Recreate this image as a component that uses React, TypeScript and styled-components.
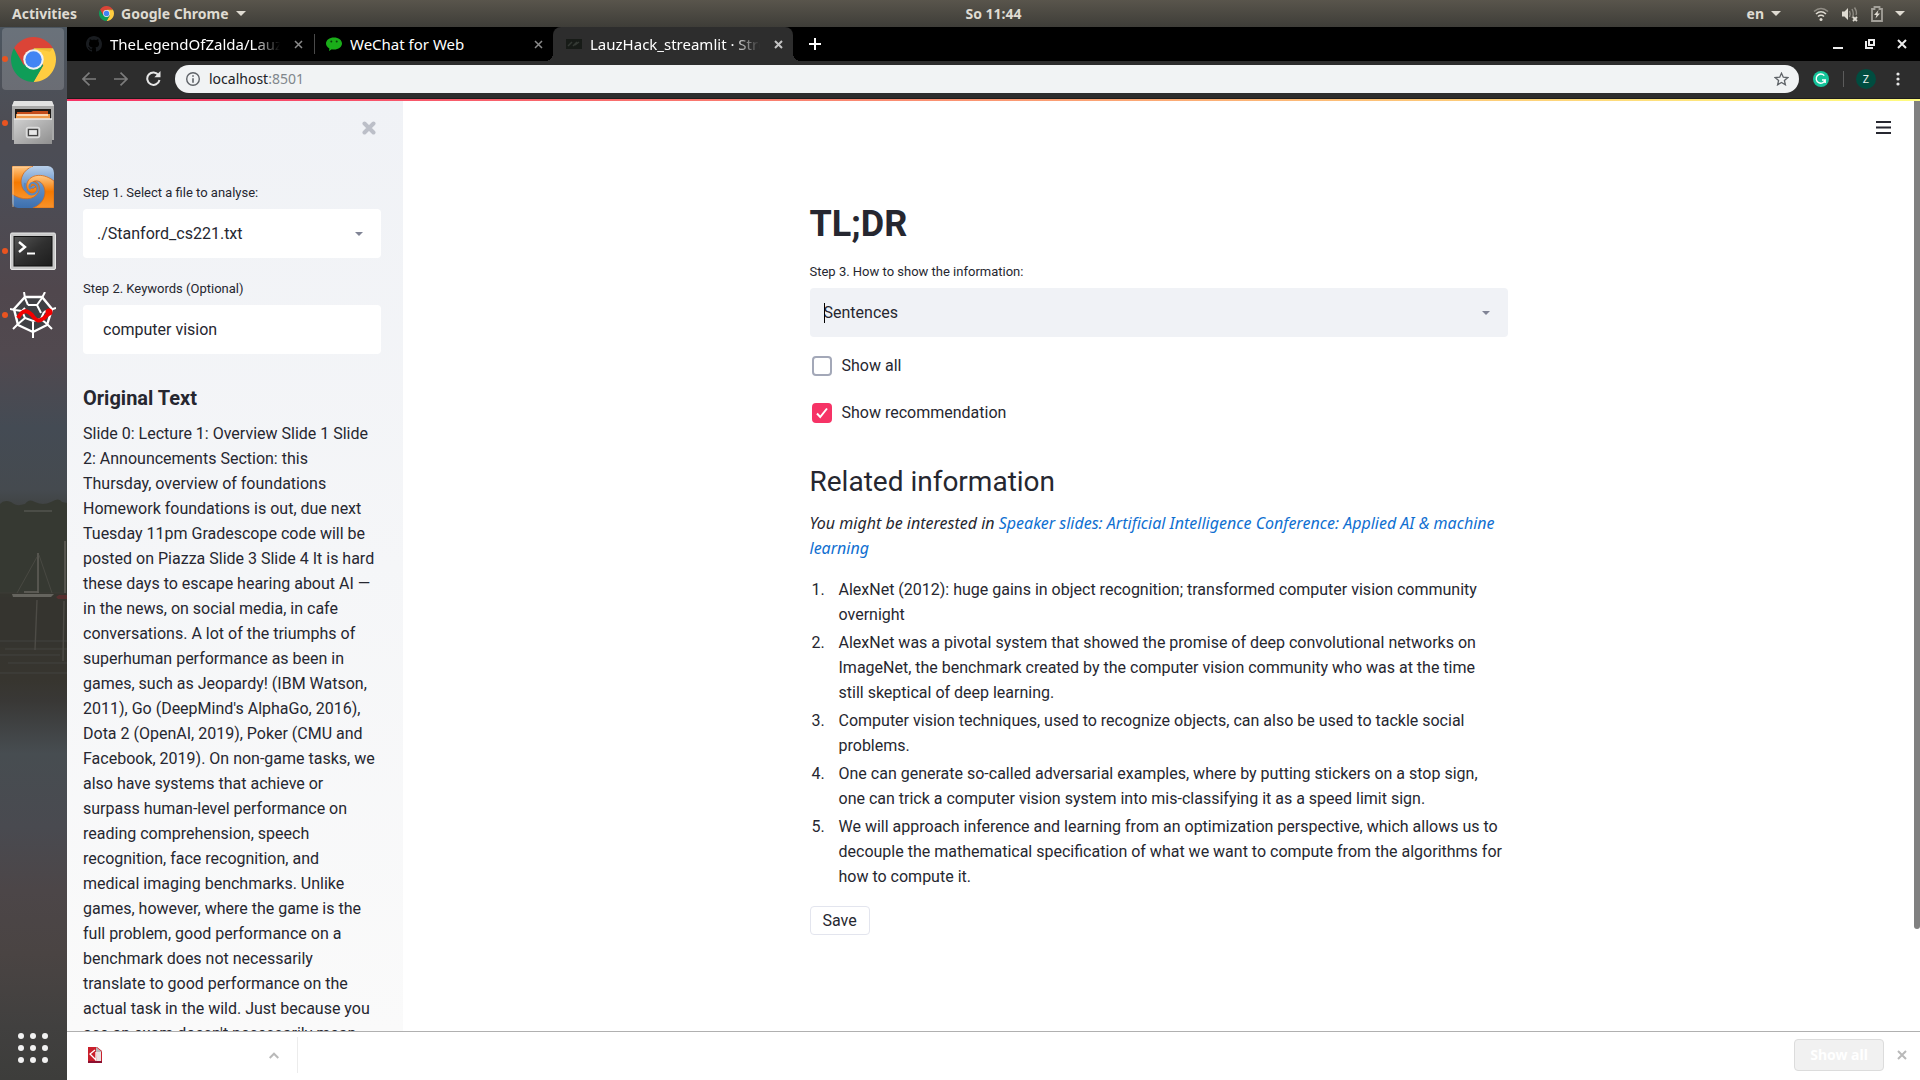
import React from "react";
import styled, { createGlobalStyle } from "styled-components";

const UI = `"Noto Sans", "Open Sans", sans-serif`;
const BODY = `Roboto, "Noto Sans", sans-serif`;

const GlobalStyle = createGlobalStyle`
  *, *::before, *::after { box-sizing: border-box; }
  body { margin: 0; background: #3d3d3b; color: #262730; font: 16px/25px ${BODY}; overflow: hidden; }
  button { padding: 0; border: 0; background: none; color: inherit; font: inherit; cursor: pointer; }
  h1, h2, h3, p, ol { margin: 0; padding: 0; }
  svg { display: block; flex: none; }
`;

/* ---------- desktop ---------- */

const Desktop = styled.div`
  display: flex;
  flex-direction: column;
  height: 100vh;
`;

const TopBar = styled.header`
  display: grid;
  grid-template-columns: 1fr auto 1fr;
  align-items: center;
  height: 27px;
  flex: none;
  padding: 0 15px 0 12px;
  background: linear-gradient(#59554c, #3e3d38);
  color: #dfdbd2;
  font: bold 14px/20px ${UI};
`;

const TopGroup = styled.div<{ $end?: boolean; $gap: number }>`
  display: flex;
  align-items: center;
  gap: ${(p) => p.$gap}px;
  justify-content: ${(p) => (p.$end ? "flex-end" : "flex-start")};
`;

const TopItem = styled.button`
  display: flex;
  align-items: center;
  gap: 7px;
`;

const Clock = styled.time`
  padding-left: 70px;
  font-size: 14px;
`;

const Workspace = styled.div`
  display: flex;
  flex: 1;
  min-height: 0;
`;

const Dock = styled.nav`
  position: relative;
  display: flex;
  flex-direction: column;
  gap: 2px;
  width: 67px;
  flex: none;
  padding: 1px 3px 1px 2px;
  background: linear-gradient(
    #4c5660 0%, #4d4d54 9%, #4b4d56 14%, #50474d 25%, #51494f 31%, #444b54 38%, #454a4f 44%,
    #3b3c38 47%, #35352f 53%, #37352f 62%, #393836 64%, #474d51 69%, #494a50 76%, #4c4648 82%, #4a4443 88%, #41403f 95%, #3d3d3b 100%
  );
`;

const Shore = styled.svg`
  position: absolute;
  left: 0;
  top: 468px;
`;

const DockItem = styled.button<{ $active?: boolean }>`
  position: relative;
  display: grid;
  place-items: center;
  height: 62px;
  width: 62px;
  border-radius: 4px;
  background: ${(p) => (p.$active ? "rgba(255,255,255,0.17)" : "transparent")};
`;

const RunningDot = styled.span`
  position: absolute;
  left: 0;
  top: 28px;
  width: 6px;
  height: 6px;
  border-radius: 50%;
  background: #e95420;
`;

const AppsButton = styled.button`
  position: relative;
  display: grid;
  place-items: center;
  height: 62px;
  width: 62px;
  margin-top: auto;
`;

/* ---------- browser ---------- */

const Browser = styled.div`
  display: flex;
  flex-direction: column;
  flex: 1;
  min-width: 0;
  background: #fff;
`;

const TabStrip = styled.div`
  display: flex;
  align-items: center;
  height: 34px;
  flex: none;
  padding: 0 8px 0 6px;
  background: #000;
  color: #fff;
  font: 15px/20px ${UI};
`;

const Tab = styled.div<{ $active?: boolean; $divider?: boolean }>`
  position: relative;
  display: flex;
  align-items: center;
  gap: 8px;
  width: 240px;
  height: 34px;
  padding: 0 5px 0 13px;
  border-radius: 8px 8px 0 0;
  background: ${(p) => (p.$active ? "#2d2d2d" : "transparent")};
  color: ${(p) => (p.$active ? "#c3c3c3" : "#8a8a8a")};

  &::before {
    content: "";
    position: absolute;
    left: -8px;
    bottom: 0;
    width: 8px;
    height: 8px;
    display: ${(p) => (p.$active ? "block" : "none")};
    background: radial-gradient(circle at 0 0, transparent 8px, #2d2d2d 8px);
  }
  &::after {
    content: "";
    position: absolute;
    display: ${(p) => (p.$active || p.$divider ? "block" : "none")};
    right: ${(p) => (p.$active ? "-8px" : "-2px")};
    bottom: ${(p) => (p.$active ? "0" : "7px")};
    width: ${(p) => (p.$active ? "8px" : "1px")};
    height: ${(p) => (p.$active ? "8px" : "20px")};
    background: ${(p) => (p.$active ? "radial-gradient(circle at 100% 0, transparent 8px, #2d2d2d 8px)" : "#4a4a4a")};
  }
`;

const TabTitle = styled.span<{ $fade?: boolean }>`
  flex: 1;
  min-width: 0;
  overflow: hidden;
  white-space: nowrap;
  color: #fff;
  mask-image: ${(p) => (p.$fade ? "linear-gradient(90deg, #000 84%, transparent)" : "none")};
`;

const IconButton = styled.button`
  display: grid;
  place-items: center;
  width: 20px;
  height: 20px;
  flex: none;
`;

const NewTab = styled(IconButton)`
  margin-left: 12px;
  color: #fff;
`;

const WindowControls = styled.div`
  display: flex;
  gap: 12px;
  margin-left: auto;
  color: #ececec;
`;

const Toolbar = styled.div`
  display: flex;
  align-items: center;
  gap: 12px;
  height: 38px;
  flex: none;
  padding: 0 12px 2px 12px;
  border-bottom: 1px solid #1d1d1d;
  background: #2d2d2d;
  color: #7c7c7c;
`;

const AddressBar = styled.form`
  display: flex;
  align-items: center;
  gap: 6px;
  flex: 1;
  height: 28px;
  padding: 0 8px;
  border-radius: 14px;
  background: #f1f3f4;
  color: #5f6368;
  font: 14px/20px ${UI};
`;

const Url = styled.a`
  flex: 1;
  color: #80868b;
  text-decoration: none;

  b { font-weight: 400; color: #202124; }
`;

const Divider = styled.span`
  width: 1px;
  height: 16px;
  background: #5c5c5c;
`;

const Avatar = styled.button`
  width: 20px;
  height: 20px;
  border-radius: 50%;
  background: #004d40;
  color: #e8f0ee;
  font: 11px/20px ${UI};
`;

/* ---------- page ---------- */

const Rainbow = styled.div`
  height: 2px;
  flex: none;
  background: linear-gradient(90deg, #f63366, #fffd80);
`;

const Page = styled.div`
  display: flex;
  flex: 1;
  min-height: 0;
`;

const Sidebar = styled.aside`
  width: 336px;
  flex: none;
  padding: 0 22px 0 16px;
  overflow: hidden;
  background: linear-gradient(#f0f2f6, #fafafa);
`;

const PanelHeader = styled.div<{ $inset: number }>`
  display: flex;
  align-items: center;
  justify-content: flex-end;
  height: 53px;
  padding-right: ${(p) => p.$inset}px;
`;

const SidebarBody = styled.div`
  padding-top: 29px;
`;

const FieldLabel = styled.label`
  display: block;
  margin-bottom: 6px;
  font-size: 13px;
  line-height: 20px;
`;

const SelectBox = styled.div<{ $plain?: boolean }>`
  position: relative;
  margin-bottom: 21px;

  svg {
    position: absolute;
    right: 18px;
    top: 23px;
    pointer-events: none;
  }
  select {
    appearance: none;
    display: block;
    width: 100%;
    height: 49px;
    padding: 0 36px 0 14px;
    border: 0;
    border-radius: 4px;
    outline: 0;
    background: ${(p) => (p.$plain ? "#fff" : "#f0f2f6")};
    color: #262730;
    font: 16px/25px ${BODY};
  }
`;

const TextCaret = styled.span`
  position: absolute;
  left: 14px;
  top: 15px;
  width: 1px;
  height: 20px;
  background: #000;
`;

const TextInput = styled.input`
  display: block;
  width: 100%;
  height: 49px;
  padding: 0 20px;
  border: 0;
  border-radius: 4px;
  outline: 0;
  background: #fff;
  color: #262730;
  font: 16px/25px ${BODY};
`;

const SidebarHeading = styled.h3`
  margin: 29px 0 8px;
  font-size: 20px;
  line-height: 30px;
`;

const SourceText = styled.p`
  padding-right: 4px;
`;

const Main = styled.main`
  flex: 1;
  min-width: 0;
  overflow: hidden;
`;

const Column = styled.div`
  max-width: 730px;
  margin: 0 auto;
  padding: 48px 16px 0;
`;

const Title = styled.h1`
  margin-bottom: 16px;
  font-size: 36px;
  line-height: 44px;
`;

const CheckRow = styled.label`
  display: flex;
  align-items: center;
  gap: 10px;
  margin: -5px 0 27px 2px;
`;

const CheckBox = styled.span`
  display: grid;
  flex: none;

  input, svg { grid-area: 1 / 1; }
  svg { display: none; place-self: center; pointer-events: none; }
  input {
    appearance: none;
    width: 20px;
    height: 20px;
    margin: 0;
    border: 2px solid #a3a8b8;
    border-radius: 4px;
    background: #fff;
  }
  input:checked { border-color: #f63366; background: #f63366; }
  input:checked + svg { display: block; }
`;

const Section = styled.section`
  padding-top: 12px;
`;

const SectionTitle = styled.h2`
  margin-bottom: 11px;
  font-size: 28px;
  font-weight: 400;
  line-height: 36px;
`;

const Suggestion = styled.p`
  margin-bottom: 16px;
  font-family: "Noto Sans", sans-serif;
  font-style: italic;

  a { color: #0f6fd1; text-decoration: none; }
`;

const Results = styled.ol`
  padding: 0 4px 0 29px;
  margin-bottom: 17px;
  list-style: none;
  counter-reset: result;

  li { counter-increment: result; }
  li + li { margin-top: 3px; }
  li::before {
    content: counter(result) ".";
    float: left;
    margin-left: -27px;
  }
`;

const SaveButton = styled.button`
  height: 29px;
  padding: 0 12px;
  border: 1px solid #e3e5ee;
  border-radius: 4px;
  background: #fff;
`;

const ScrollTrack = styled.div`
  width: 6px;
  flex: none;
`;

const ScrollThumb = styled.div`
  height: 89%;
  border-radius: 0 0 3px 3px;
  background: #808080;
`;

const DownloadBar = styled.footer`
  display: flex;
  align-items: center;
  height: 49px;
  flex: none;
  padding: 0 8px 2px 18px;
  border-top: 1px solid #b0b0b0;
  background: #fff;
  color: #b9b9b9;
`;

const Download = styled.div`
  display: flex;
  align-items: center;
  justify-content: space-between;
  width: 213px;
  height: 36px;
  padding-right: 13px;
  border-right: 1px solid #ececec;
`;

const ShowAll = styled.button`
  height: 32px;
  width: 90px;
  margin: 0 8px 0 auto;
  border: 1px solid #dcdcdc;
  border-radius: 4px;
  background: #f1f1f1;
  color: #fff;
  font: bold 14px/20px ${UI};
`;

/* ---------- drawings ---------- */

const Triangle = ({ w, h, fill }: { w: number; h: number; fill: string }) => (
  <svg width={w} height={h} viewBox="0 0 10 5" preserveAspectRatio="none"><path d="M0 0h10L5 5z" fill={fill} /></svg>
);

const Cross = ({ size, width = 2 }: { size: number; width?: number }) => (
  <svg width={size} height={size} viewBox={`0 0 ${size} ${size}`} stroke="currentColor" strokeWidth={width}>
    <path d={`M1 1L${size - 1} ${size - 1}M${size - 1} 1L1 ${size - 1}`} />
  </svg>
);

const ChromeLogo = ({ size }: { size: number }) => (
  <svg width={size} height={size} viewBox="2 2 44 44">
    <path d="M4.95 13A22 22 0 0 1 43.05 13H24L14.47 29.5z" fill="#db4437" />
    <path d="M43.05 13A22 22 0 0 1 24 46L33.53 29.5L24 13z" fill="#ffcd40" />
    <path d="M24 46A22 22 0 0 1 4.95 13L14.47 29.5H33.53z" fill="#0f9d58" />
    <path d="M24 13H43.05L40 16.5z" fill="#d9a21c" opacity=".35" />
    <circle cx="24" cy="24" r="10" fill="#f1f1f1" />
    <circle cx="24" cy="24" r="8" fill="#4285f4" />
  </svg>
);

const FilesIcon = () => (
  <svg width="44" height="46" viewBox="0 0 44 46">
    <defs>
      <linearGradient id="cab" x1="0" y1="0" x2="1" y2="1"><stop offset="0" stopColor="#d0d0d0" /><stop offset="1" stopColor="#8f8f8f" /></linearGradient>
    </defs>
    <path d="M3 1h38l2 5v34H1V6z" fill="#a9a9a9" />
    <path d="M3 1h38l2 5H1z" fill="#e2e2e2" />
    <rect x="4" y="9" width="36" height="12" fill="#1d1a18" />
    <path d="M6 12h14l2-1h15v8H6z" fill="#c44d1a" />
    <path d="M5 14h34v6H5z" fill="#ef9a4b" />
    <path d="M6 15h31" stroke="#fff4e2" strokeWidth="1.4" />
    <path d="M3 19h38v25H3z" fill="url(#cab)" />
    <path d="M3 19h38" stroke="#ececec" strokeWidth="1.4" />
    <rect x="15.5" y="27.5" width="13" height="10" rx="2" fill="#b5b5b5" stroke="#dcdcdc" strokeWidth="1.5" />
    <rect x="17.5" y="29.5" width="9" height="6" fill="#e8e8e8" stroke="#444" strokeWidth="1.2" />
  </svg>
);

const SwirlIcon = () => (
  <svg width="42" height="42" viewBox="0 0 42 42">
    <defs>
      <linearGradient id="sb" x1="0" y1="0" x2="0" y2="1"><stop offset="0" stopColor="#b9d0ea" /><stop offset=".5" stopColor="#5f8fc8" /><stop offset="1" stopColor="#3d6fae" /></linearGradient>
      <linearGradient id="so" x1="0" y1="0" x2="0" y2="1"><stop offset="0" stopColor="#ffc987" /><stop offset=".5" stopColor="#f57900" /><stop offset="1" stopColor="#f9932a" /></linearGradient>
    </defs>
    <path d="M0 0H36Q42 1 42 7V42H6Q0 41 0 35z" fill="url(#sb)" />
    <path d="M0 0H21C11 4 7 13 10 21C13 29 22 29 24 22C24 19 20 18 19 21C16 20 17 15 21 15C27 15 29 22 26 27C22 34 10 35 0 28z" fill="url(#so)" stroke="#cf6a1c" strokeWidth=".8" />
    <path d="M42 42H21C31 38 35 29 32 21C29 13 20 13 18 20C18 23 22 24 23 21C26 22 25 27 21 27C15 27 13 20 16 15C20 8 32 7 42 15z" fill="url(#so)" stroke="#cf6a1c" strokeWidth=".8" />
    <path d="M13 17C12 24 16 30 22 28C27 26 27 19 22 17C18 16 16 21 19 23" fill="none" stroke="#5a88c0" strokeWidth="2" />
    <path d="M1 41V1H20" fill="none" stroke="#ffdcae" strokeWidth="1" opacity=".7" />
  </svg>
);

const TerminalIcon = () => (
  <svg width="46" height="38" viewBox="0 0 46 38">
    <defs><linearGradient id="term" x1="0" y1="0" x2="1" y2="1"><stop offset="0" stopColor="#555" /><stop offset=".5" stopColor="#303030" /><stop offset="1" stopColor="#1c1c1c" /></linearGradient></defs>
    <rect x=".5" y="1" width="45" height="36.5" rx="1.5" fill="#c9c9c9" stroke="#e6e6e6" />
    <rect x="4" y="4.500" width="38" height="29.5" fill="url(#term)" stroke="#111" />
    <path d="M9 10l6 5-6 5" fill="none" stroke="#fff" strokeWidth="2.4" />
    <path d="M17 21.500h8" stroke="#fff" strokeWidth="2" />
  </svg>
);

const WebIcon = () => (
  <svg width="46" height="46" viewBox="0 0 46 46" fill="none">
    <path d="M14 5L32 5L42 17L38 34L23 41L8 34L4 17z" fill="#3f4044" />
    <g stroke="#fff" strokeWidth="2">
      <path d="M14 0L15 6L18 13M35 0L32 6L27 13L31 21M46 16L40 18L34 20M42 37L37 32L31 27M23 46V30M3 37L8 32L15 26M0 17L5 18L12 19" />
      <path d="M15 5L32 5L42 17L37 33L23 40L8 33L4 17z" strokeWidth="2.4" />
      <path d="M18 13L27 13M12 19L15 26L23 29L31 27M15 16L12 19M34 20L31 27" />
    </g>
    <path d="M8 26C13 17 17 18 22 23C26 29 29 30 34 26Q37 23 41 20" stroke="#f20000" strokeWidth="4" />
    <circle cx="39" cy="20" r="3.5" fill="#f20000" />
  </svg>
);

const GithubMark = () => (
  <svg width="16" height="16" viewBox="0 0 16 16" fill="#191c20">
    <path d="M8 0C3.58 0 0 3.58 0 8c0 3.54 2.29 6.53 5.47 7.59.4.07.55-.17.55-.38 0-.19-.01-.82-.01-1.49-2.01.37-2.53-.49-2.69-.94-.09-.23-.48-.94-.82-1.13-.28-.15-.68-.52-.01-.53.63-.01 1.08.58 1.23.82.72 1.21 1.87.87 2.33.66.07-.52.28-.87.51-1.07-1.78-.2-3.64-.89-3.64-3.95 0-.87.31-1.59.82-2.15-.08-.2-.36-1.02.08-2.12 0 0 .67-.21 2.2.82.64-.18 1.32-.27 2-.27s1.36.09 2 .27c1.53-1.04 2.2-.82 2.2-.82.44 1.1.16 1.92.08 2.12.51.56.82 1.27.82 2.15 0 3.07-1.87 3.75-3.65 3.95.29.25.54.73.54 1.48 0 1.07-.01 1.93-.01 2.2 0 .21.15.46.55.38A8.01 8.01 0 0 0 16 8c0-4.42-3.58-8-8-8z" />
  </svg>
);

const WechatMark = () => (
  <svg width="16" height="16" viewBox="0 0 16 16">
    <path d="M8 1.500c4.500 0 8 2.600 8 6s-3.500 6-8 6c-.8 0-1.500-.1-2.200-.3L3 15l.4-2.600C1.300 11.300 0 9.600 0 7.500c0-3.400 3.500-6 8-6z" fill="#1aad19" />
    <circle cx="5.3" cy="5.6" r="1" fill="#0a3d0a" /><circle cx="10.7" cy="5.6" r="1" fill="#0a3d0a" />
  </svg>
);

const StreamlitMark = () => (
  <svg width="16" height="16" viewBox="0 0 16 16">
    <rect y="3" width="16" height="10" fill="#171b17" />
    <path d="M2 10l4-4M7 10l4-4M9 9l4-3" stroke="#343934" strokeWidth="1.5" />
  </svg>
);

const StatusIcons = () => (
  <>
    <svg width="16" height="16" viewBox="0 0 16 16" fill="none" stroke="#dfdbd2" strokeWidth="1.6">
      <path d="M1 5.500Q8-.5 15 5.500" opacity=".45" /><path d="M3 8Q8 3.500 13 8M5 10.500Q8 8 11 10.500" /><circle cx="8" cy="13.5" r="1.5" fill="#dfdbd2" stroke="none" />
    </svg>
    <svg width="18" height="16" viewBox="0 0 18 16" fill="none" stroke="#dfdbd2" strokeWidth="1.4">
      <path d="M1 5.500h2.500L7 2v12l-3.500-3.500H1z" fill="#dfdbd2" stroke="none" />
      <path d="M8.500 5Q10 8 8.500 11M11 3Q13.500 8 11 12M13.500 1.500Q16.500 6 15 9" opacity=".45" /><path d="M12 11l4 4M16 11l-4 4" strokeWidth="1.8" />
    </svg>
    <svg width="12" height="16" viewBox="0 0 12 16" fill="none">
      <path d="M1 3h2.500V1h5v2H11v12H1z" stroke="#a3a099" strokeWidth="1.8" /><path d="M7.500 4L3 9h2.500L4.500 12.500 9 7.500H6.500z" fill="#dfdbd2" />
    </svg>
  </>
);

const ShoreScene = () => (
  <Shore width="67" height="200" viewBox="0 0 67 200" aria-hidden="true">
    <path d="M0 9q4-5 11-2q5 5 14 2q4-6 10-2q8 4 16 0q8-5 11 0l5 1v90H0z" fill="#363932" />
    <path d="M24 16h28" stroke="#53544f" strokeWidth="1.5" />
    <path d="M0 102h67v50H0z" fill="#35342f" />
    <path d="M0 98h67" stroke="#3d3c36" strokeWidth="1" />
    <path d="M12 99h42l-3 3H13z" fill="#65645e" />
    <path d="M24 96h14l1 2H24z" fill="#5a5953" />
    <path d="M38 58v40M65 46v52" stroke="#64635c" strokeWidth="1.4" />
    <path d="M39 60l13 38M37 62L17 98" stroke="#4d4c46" strokeWidth=".8" />
    <path d="M56 102l3-2h8v4H58z" fill="#572f2f" />
    <path d="M37 105l-2 50M64 106l-1 60" stroke="#4d4b46" strokeWidth="1.4" />
    <path d="M0 146h67M5 154h62M0 160h60M8 168h59M0 178h67" stroke="#4b4d4c" strokeWidth="1" opacity=".6" />
  </Shore>
);

const dockApps = [
  { name: "Google Chrome", icon: <ChromeLogo size={45} />, active: true, running: true },
  { name: "Files", icon: <FilesIcon />, running: true },
  { name: "Swirl", icon: <SwirlIcon /> },
  { name: "Terminal", icon: <TerminalIcon />, running: true },
  { name: "Spyder", icon: <WebIcon />, running: true },
];

const results = [
  "AlexNet (2012): huge gains in object recognition; transformed computer vision community overnight",
  "AlexNet was a pivotal system that showed the promise of deep convolutional networks on ImageNet, the benchmark created by the computer vision community who was at the time still skeptical of deep learning.",
  "Computer vision techniques, used to recognize objects, can also be used to tackle social problems.",
  "One can generate so-called adversarial examples, where by putting stickers on a stop sign, one can trick a computer vision system into mis-classifying it as a speed limit sign.",
  "We will approach inference and learning from an optimization perspective, which allows us to decouple the mathematical specification of what we want to compute from the algorithms for how to compute it.",
];

const sourceText =
  "Slide 0: Lecture 1: Overview Slide 1 Slide 2: Announcements Section: this Thursday, overview of foundations Homework foundations is out, due next Tuesday 11pm Gradescope code will be posted on Piazza Slide 3 Slide 4 It is hard these days to escape hearing about AI — in the news, on social media, in cafe conversations. A lot of the triumphs of superhuman performance as been in games, such as Jeopardy! (IBM Watson, 2011), Go (DeepMind's AlphaGo, 2016), Dota 2 (OpenAI, 2019), Poker (CMU and Facebook, 2019). On non-game tasks, we also have systems that achieve or surpass human-level performance on reading comprehension, speech recognition, face recognition, and medical imaging benchmarks. Unlike games, however, where the game is the full problem, good performance on a benchmark does not necessarily translate to good performance on the actual task in the wild. Just because you ace an exam doesn't necessarily mean";

const Check = ({ label, on }: { label: string; on?: boolean }) => (
  <CheckRow>
    <CheckBox>
      <input type="checkbox" defaultChecked={on} />
      <svg width="12" height="12" viewBox="0 0 12 12" fill="none" stroke="#fff" strokeWidth="2"><path d="M1 6.500l3.200 3.500L11 1.500" /></svg>
    </CheckBox>
    {label}
  </CheckRow>
);

export default function App() {
  return (
    <Desktop>
      <GlobalStyle />
      <TopBar>
        <TopGroup $gap={22}>
          <TopItem>Activities</TopItem>
          <TopItem><ChromeLogo size={15} />Google Chrome<Triangle w={10} h={5} fill="#dfdbd2" /></TopItem>
        </TopGroup>
        <Clock>So 11:44</Clock>
        <TopGroup $end $gap={32}>
          <TopItem>en<Triangle w={10} h={5} fill="#dfdbd2" /></TopItem>
          <TopGroup $gap={12}>
            <StatusIcons /><Triangle w={10} h={5} fill="#dfdbd2" />
          </TopGroup>
        </TopGroup>
      </TopBar>
      <Workspace>
        <Dock aria-label="Dock">
          <ShoreScene />
          {dockApps.map((app) => (
            <DockItem key={app.name} aria-label={app.name} $active={app.active}>
              {app.running && <RunningDot />}
              {app.icon}
            </DockItem>
          ))}
          <AppsButton aria-label="Show applications">
            <svg width="30" height="30" viewBox="0 0 30 30" fill="#f2f2f2">
              {[3, 15, 27].map((y) => [3, 15, 27].map((x) => <circle key={`${x}-${y}`} cx={x} cy={y} r="3" />))}
            </svg>
          </AppsButton>
        </Dock>
        <Browser>
          <TabStrip>
            <Tab $divider>
              <GithubMark /><TabTitle $fade>TheLegendOfZalda/LauzHack</TabTitle>
              <IconButton aria-label="Close tab"><Cross size={9} width={1.5} /></IconButton>
            </Tab>
            <Tab>
              <WechatMark /><TabTitle>WeChat for Web</TabTitle>
              <IconButton aria-label="Close tab"><Cross size={9} width={1.5} /></IconButton>
            </Tab>
            <Tab $active>
              <StreamlitMark /><TabTitle $fade>LauzHack_streamlit · Streamlit</TabTitle>
              <IconButton aria-label="Close tab"><Cross size={9} /></IconButton>
            </Tab>
            <NewTab aria-label="New tab">
              <svg width="12" height="12" viewBox="0 0 12 12" stroke="currentColor" strokeWidth="2"><path d="M6 0v12M0 6h12" /></svg>
            </NewTab>
            <WindowControls>
              <IconButton aria-label="Minimize">
                <svg width="10" height="10" viewBox="0 0 10 10"><path d="M0 8h10v2H0z" fill="currentColor" /></svg>
              </IconButton>
              <IconButton aria-label="Restore">
                <svg width="10" height="10" viewBox="0 0 10 10" fill="none" stroke="currentColor" strokeWidth="2"><path d="M4 1h5v5H4zM1 2v7h7" /></svg>
              </IconButton>
              <IconButton aria-label="Close window"><Cross size={10} /></IconButton>
            </WindowControls>
          </TabStrip>
          <Toolbar>
            <IconButton aria-label="Back">
              <svg width="14" height="14" viewBox="0 0 14 14" fill="none" stroke="currentColor" strokeWidth="1.7"><path d="M14 7H1M7.500 0.600L1 7l6.500 6.400" /></svg>
            </IconButton>
            <IconButton aria-label="Forward">
              <svg width="14" height="14" viewBox="0 0 14 14" fill="none" stroke="currentColor" strokeWidth="1.7"><path d="M0 7h13M6.500 0.600L13 7l-6.500 6.400" /></svg>
            </IconButton>
            <IconButton aria-label="Reload">
              <svg width="15" height="15" viewBox="0 0 15 15" fill="none" stroke="#e6e6e6" strokeWidth="2"><path d="M12.600 4.200A6.200 6.200 0 1 0 13.500 9" /><path d="M14.500 0v6.200H8.300z" fill="#e6e6e6" stroke="none" /></svg>
            </IconButton>
            <AddressBar onSubmit={(e) => e.preventDefault()}>
              <IconButton type="button" aria-label="Site information">
                <svg width="14" height="14" viewBox="0 0 14 14" fill="none" stroke="currentColor"><circle cx="7" cy="7" r="6.3" strokeWidth="1.4" /><path d="M7 6.200v4.600M7 3.300v1.500" strokeWidth="1.6" /></svg>
              </IconButton>
              <Url href="#"><b>localhost</b>:8501</Url>
              <IconButton type="button" aria-label="Bookmark">
                <svg width="15" height="14" viewBox="0 0 15 14" fill="none" stroke="currentColor" strokeWidth="1.3"><path d="M7.500 1.200l1.800 4 4.500.4-3.400 2.900 1 4.300-3.900-2.300-3.900 2.300 1-4.300L1.200 5.600l4.500-.4z" /></svg>
              </IconButton>
            </AddressBar>
            <IconButton aria-label="Grammarly">
              <svg width="16" height="16" viewBox="0 0 16 16"><circle cx="8" cy="8" r="8" fill="#15c39a" /><path d="M11.300 4.600A4.600 4.600 0 1 0 12.200 9H9M12.200 9v3" fill="none" stroke="#fff" strokeWidth="1.4" /></svg>
            </IconButton>
            <Divider />
            <Avatar>Z</Avatar>
            <IconButton aria-label="Menu">
              <svg width="4" height="14" viewBox="0 0 4 14" fill="#e6e6e6"><circle cx="2" cy="2" r="1.6" /><circle cx="2" cy="7" r="1.6" /><circle cx="2" cy="12" r="1.6" /></svg>
            </IconButton>
          </Toolbar>
          <Rainbow />
          <Page>
            <Sidebar>
              <PanelHeader $inset={2}>
                <IconButton aria-label="Close sidebar">
                  <svg width="14" height="14" viewBox="0 0 14 14" stroke="#bcbfc8" strokeWidth="4" strokeLinecap="round"><path d="M2.500 2.500l9 9M11.500 2.500l-9 9" /></svg>
                </IconButton>
              </PanelHeader>
              <SidebarBody>
                <FieldLabel htmlFor="file">Step 1. Select a file to analyse:</FieldLabel>
                <SelectBox $plain>
                  <select id="file"><option>./Stanford_cs221.txt</option></select>
                  <Triangle w={8} h={4} fill="#808495" />
                </SelectBox>
                <FieldLabel htmlFor="keywords">Step 2. Keywords (Optional)</FieldLabel>
                <TextInput id="keywords" defaultValue="computer vision" />
                <SidebarHeading>Original Text</SidebarHeading>
                <SourceText>{sourceText}</SourceText>
              </SidebarBody>
            </Sidebar>
            <Main>
              <PanelHeader $inset={21}>
                <IconButton aria-label="App menu">
                  <svg width="15" height="13" viewBox="0 0 15 13" fill="#262730"><path d="M0 0h15v2H0zM0 5.500h15v2H0zM0 11h15v2H0z" /></svg>
                </IconButton>
              </PanelHeader>
              <Column>
                <Title>TL;DR</Title>
                <FieldLabel htmlFor="mode">Step 3. How to show the information:</FieldLabel>
                <SelectBox>
                  <select id="mode"><option>Sentences</option></select>
                  <TextCaret />
                  <Triangle w={8} h={4} fill="#808495" />
                </SelectBox>
                <Check label="Show all" />
                <Check label="Show recommendation" on />
                <Section>
                  <SectionTitle>Related information</SectionTitle>
                  <Suggestion>
                    You might be interested in <a href="#">Speaker slides: Artificial Intelligence Conference: Applied AI &amp; machine learning</a>
                  </Suggestion>
                  <Results>{results.map((text) => <li key={text}>{text}</li>)}</Results>
                  <SaveButton>Save</SaveButton>
                </Section>
              </Column>
            </Main>
            <ScrollTrack><ScrollThumb /></ScrollTrack>
          </Page>
          <DownloadBar>
            <Download>
              <IconButton aria-label="Downloaded file">
                <svg width="14" height="16" viewBox="0 0 14 16"><path d="M0 0h9l5 4v12H0z" fill="#c9202c" /><path d="M8 1l5 4v10H9z" fill="#e9e2e2" /><path d="M8 0v5h6z" fill="#b9b9b9" /><path d="M7 3L2 7l6 6M8 5v9" fill="none" stroke="#fff" strokeWidth="1.3" /><path d="M0 14h14v2H0z" fill="#8c1030" /></svg>
              </IconButton>
              <IconButton aria-label="Download options">
                <svg width="10" height="7" viewBox="0 0 10 7" fill="none" stroke="currentColor" strokeWidth="2"><path d="M0.700 6L5 1.700 9.300 6" /></svg>
              </IconButton>
            </Download>
            <ShowAll>Show all</ShowAll>
            <IconButton aria-label="Close downloads"><Cross size={10} /></IconButton>
          </DownloadBar>
        </Browser>
      </Workspace>
    </Desktop>
  );
}
